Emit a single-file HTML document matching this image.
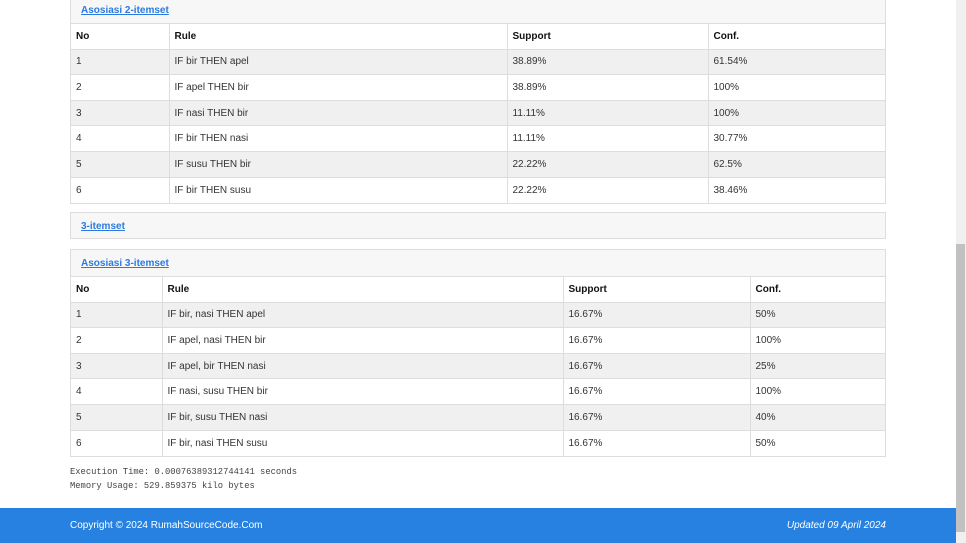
<!DOCTYPE html>
<html><head><meta charset="utf-8"><style>
*{box-sizing:border-box;margin:0;padding:0}
body{width:966px;height:543px;overflow:hidden;background:#fff;font-family:"Liberation Sans",sans-serif;font-size:10px;color:#333;position:relative}
.card{position:absolute;left:70px;width:816px;border:1px solid #ddd;background:#fff}
.hd{background:#f7f7f7;height:26px;padding-left:10px;line-height:26px;font-weight:bold;font-size:10px}
.hd a{color:#2a7ae2;text-decoration:underline}
table{border-collapse:collapse;width:100%;table-layout:fixed}
td,th{border-top:1px solid #ddd;border-left:1px solid #ddd;height:25.6px;padding:0 5px;text-align:left;font-size:10px}
th{font-weight:bold;color:#111}
td:first-child,th:first-child{border-left:none}
tr.o td{background:#f0f0f0}
.mono{position:absolute;left:70px;font-family:"Liberation Mono",monospace;font-size:8.8px;color:#444}
.foot{position:absolute;left:0;top:508px;width:956px;height:35px;background:#2681e1;color:#fff;font-size:10px}
.sb{position:absolute;right:0;top:0;width:10px;height:543px;background:#f0f0f0}
.th{position:absolute;right:1px;top:244px;width:9px;height:288px;background:#c1c1c1}
</style></head><body>
<div style="position:absolute;left:407px;top:0;width:30px;height:2px;background:#9cc3ee"></div>
<div style="position:absolute;left:437px;top:0;width:120px;height:1px;background:#e6e6e6"></div>
<div class="card" style="top:-5px"><div class="hd" style="height:27px;line-height:29px"><a>Asosiasi 2-itemset</a></div>
<table><colgroup><col style="width:98px"><col style="width:338px"><col style="width:201px"><col></colgroup>
<tr><th>No</th><th>Rule</th><th>Support</th><th>Conf.</th></tr>
<tr class="o"><td>1</td><td>IF bir THEN apel</td><td>38.89%</td><td>61.54%</td></tr>
<tr><td>2</td><td>IF apel THEN bir</td><td>38.89%</td><td>100%</td></tr>
<tr class="o"><td>3</td><td>IF nasi THEN bir</td><td>11.11%</td><td>100%</td></tr>
<tr><td>4</td><td>IF bir THEN nasi</td><td>11.11%</td><td>30.77%</td></tr>
<tr class="o"><td>5</td><td>IF susu THEN bir</td><td>22.22%</td><td>62.5%</td></tr>
<tr><td>6</td><td>IF bir THEN susu</td><td>22.22%</td><td>38.46%</td></tr>
</table></div>
<div class="card" style="top:212px"><div class="hd" style="height:25px;line-height:27px"><a>3-itemset</a></div></div>
<div class="card" style="top:249px"><div class="hd" style="line-height:28px"><a>Asosiasi 3-itemset</a></div>
<table><colgroup><col style="width:91px"><col style="width:401px"><col style="width:187px"><col></colgroup>
<tr><th>No</th><th>Rule</th><th>Support</th><th>Conf.</th></tr>
<tr class="o"><td>1</td><td>IF bir, nasi THEN apel</td><td>16.67%</td><td>50%</td></tr>
<tr><td>2</td><td>IF apel, nasi THEN bir</td><td>16.67%</td><td>100%</td></tr>
<tr class="o"><td>3</td><td>IF apel, bir THEN nasi</td><td>16.67%</td><td>25%</td></tr>
<tr><td>4</td><td>IF nasi, susu THEN bir</td><td>16.67%</td><td>100%</td></tr>
<tr class="o"><td>5</td><td>IF bir, susu THEN nasi</td><td>16.67%</td><td>40%</td></tr>
<tr><td>6</td><td>IF bir, nasi THEN susu</td><td>16.67%</td><td>50%</td></tr>
</table></div>
<div class="mono" style="top:467px">Execution Time: 0.00076389312744141 seconds</div>
<div class="mono" style="top:481px">Memory Usage: 529.859375 kilo bytes</div>
<div class="foot"><span style="position:absolute;left:70px;top:12px">Copyright © 2024 RumahSourceCode.Com</span><span style="position:absolute;right:70px;top:12px;font-style:italic">Updated 09 April 2024</span></div>
<div class="sb"></div><div class="th"></div>
</body></html>
